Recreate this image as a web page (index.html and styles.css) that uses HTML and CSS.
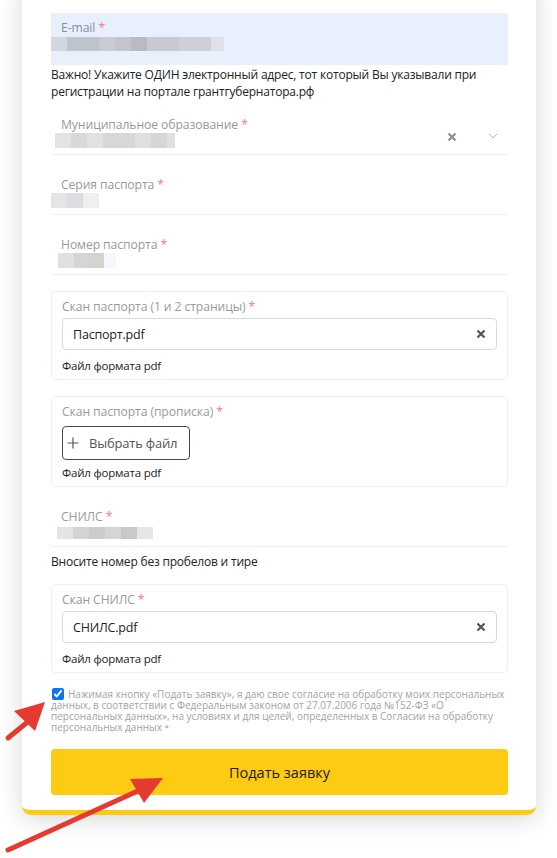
FILE: index.html
```html
<!DOCTYPE html>
<html lang="ru">
<head>
<meta charset="utf-8">
<title>Заявка</title>
<link rel="stylesheet" href="styles.css">
</head>
<body>
<div class="page">
  <form class="card">
    <div class="field field-filled">
      <div class="label">E-mail <span class="req">*</span></div>
      <div class="mosaic mosaic-email"></div>
    </div>
    <p class="hint">Важно! Укажите ОДИН электронный адрес, тот который Вы указывали при регистрации на портале грантгубернатора.рф</p>

    <div class="field field-select field-first">
      <div class="field-main">
        <div class="label">Муниципальное образование <span class="req">*</span></div>
        <div class="mosaic mosaic-muni"></div>
      </div>
      <svg class="icon-clear" viewBox="0 0 10 10" width="10" height="10"><path d="M1.5 1.5 L8.5 8.5 M8.5 1.5 L1.5 8.5" /></svg>
      <svg class="icon-chevron" viewBox="0 0 10 6" width="10" height="6"><path d="M1 1 L5 5 L9 1" /></svg>
    </div>

    <div class="field">
      <div class="label">Серия паспорта <span class="req">*</span></div>
      <div class="mosaic mosaic-series"></div>
    </div>

    <div class="field">
      <div class="label">Номер паспорта <span class="req">*</span></div>
      <div class="mosaic mosaic-number"></div>
    </div>

    <div class="upload">
      <div class="label">Скан паспорта (1 и 2 страницы) <span class="req">*</span></div>
      <div class="file-input">
        <span class="file-name">Паспорт.pdf</span>
        <svg class="icon-remove" viewBox="0 0 10 10" width="10" height="10"><path d="M1.5 1.5 L8.5 8.5 M8.5 1.5 L1.5 8.5" /></svg>
      </div>
      <div class="note">Файл формата pdf</div>
    </div>

    <div class="upload">
      <div class="label">Скан паспорта (прописка) <span class="req">*</span></div>
      <button type="button" class="choose-btn">
        <svg class="icon-plus" viewBox="0 0 12 12" width="12" height="12"><path d="M6 0.5 V11.5 M0.5 6 H11.5" /></svg>
        <span>Выбрать файл</span>
      </button>
      <div class="note note-tight">Файл формата pdf</div>
    </div>

    <div class="field field-snils">
      <div class="label">СНИЛС <span class="req">*</span></div>
      <div class="mosaic mosaic-snils"></div>
    </div>
    <p class="hint hint-snils">Вносите номер без пробелов и тире</p>

    <div class="upload upload-snils">
      <div class="label">Скан СНИЛС <span class="req">*</span></div>
      <div class="file-input">
        <span class="file-name">СНИЛС.pdf</span>
        <svg class="icon-remove" viewBox="0 0 10 10" width="10" height="10"><path d="M1.5 1.5 L8.5 8.5 M8.5 1.5 L1.5 8.5" /></svg>
      </div>
      <div class="note">Файл формата pdf</div>
    </div>

    <p class="consent"><input type="checkbox" class="consent-check" checked>Нажимая кнопку «Подать заявку», я даю свое согласие на обработку моих персональных данных, в соответствии с Федеральным законом от 27.07.2006 года №152-ФЗ «О персональных данных», на условиях и для целей, определенных в Согласии на обработку персональных данных</p>

    <button type="button" class="submit">Подать заявку</button>
  </form>
</div>

<svg class="arrows" viewBox="0 0 557 858" width="557" height="858">
  <line x1="8" y1="738" x2="30" y2="720" />
  <polygon points="45,702 14,711 35,731" />
  <line x1="8" y1="850" x2="140" y2="790" />
  <polygon points="163,778 130,779 144,803" />
</svg>
</body>
</html>
```

FILE: styles.css
```css
* {
  box-sizing: border-box;
}

html, body {
  margin: 0;
  padding: 0;
  background: #ffffff;
  overflow: hidden;
}

body {
  font-family: "Open Sans", "Noto Sans", sans-serif;
  color: #222222;
  height: 858px;
  position: relative;
}

.page {
  padding: 0 21px 0 22px;
}

.card {
  margin-top: -20px;
  background: #ffffff;
  border-radius: 0 0 9px 9px;
  border-bottom: 5px solid #fdcb14;
  box-shadow: 0 4px 24px rgba(0, 0, 0, 0.16);
  padding: 33px 28px 15px 29px;
  display: flex;
  flex-direction: column;
}

.label {
  font-size: 12.2px;
  letter-spacing: -0.1px;
  line-height: 16px;
  color: #9a9a9a;
  white-space: nowrap;
}

.field-filled .label {
  color: #8a8d93;
}

.req {
  color: #ff7a7a;
}

.field {
  height: 52px;
  margin-top: 8px;
  padding: 14px 10px 0;
  border-bottom: 1px solid #f0f0f0;
}

.field-filled {
  margin-top: 0;
  padding-top: 7px;
  height: 52px;
  background: #e8f0fe;
  border-bottom: none;
}

.field-first {
  margin-top: 3px;
}

.field-select {
  display: flex;
  align-items: flex-start;
}

.field-main {
  flex: 1;
}

.icon-clear {
  margin-top: 15px;
  margin-right: 31px;
  fill: none;
  stroke: #8f8f8f;
  stroke-width: 2.2;
}

.icon-chevron {
  margin-top: 16px;
  fill: none;
  stroke: #b5b5b5;
  stroke-width: 1;
}

.mosaic {
  height: 15px;
}

.mosaic-email {
  margin-left: -10px;
  margin-top: 1px;
  height: 14px;
  width: 173px;
  background: linear-gradient(90deg,
    #d2d6dd 0 16px, #bfc3cb 16px 48px, #c9ccd4 48px 64px, #c2c5cd 64px 80px,
    #b8bbc3 80px 96px, #c7cad3 96px 128px, #cdd0d9 128px 160px, #dde1ea 160px 173px);
}

.mosaic-muni {
  margin-left: -6px;
  width: 120px;
  background: linear-gradient(90deg,
    #e4e3e2 0 16px, #d9d8d6 16px 32px, #e2e1e0 32px 48px, #d7d8d6 48px 80px,
    #dfe0de 80px 96px, #d6d7d5 96px 112px, #dde0e4 112px 120px);
}

.mosaic-series {
  margin-left: -10px;
  width: 48px;
  background: linear-gradient(90deg, #e6e5e6 0 16px, #dcdde0 16px 32px, #eef0f0 32px 48px);
}

.mosaic-number {
  margin-left: -3px;
  width: 58px;
  background: linear-gradient(90deg, #e3dfe1 0 16px, #d5d5d5 16px 32px, #d3d3d3 32px 46px, #f4f8fc 46px 58px);
}

.mosaic-snils {
  margin-left: -4px;
  margin-top: 2px;
  height: 12px;
  width: 96px;
  background: linear-gradient(90deg,
    #e5e3e5 0 16px, #d3d2d4 16px 32px, #cdcccd 32px 48px, #d6d5d6 48px 64px,
    #c9c8ca 64px 80px, #e6e6e8 80px 96px);
}

.hint {
  margin: 1px 0 0;
  font-size: 12px;
  letter-spacing: -0.2px;
  line-height: 17px;
  color: #222222;
}

.hint-snils {
  margin-top: 6px;
}

.upload {
  margin-top: 16px;
  border: 1px solid #f0f0f0;
  border-radius: 4px;
  padding: 7px 10px 5px;
}

.upload-snils {
  margin-top: 14px;
}

.file-input {
  margin-top: 3px;
  height: 32px;
  border: 1px solid #d9d9d9;
  border-radius: 4px;
  padding: 0 10px 0 10px;
  display: flex;
  align-items: center;
  justify-content: space-between;
}

.file-name {
  font-size: 12.5px;
  letter-spacing: -0.2px;
  color: #222222;
}

.icon-remove {
  fill: none;
  stroke: #555555;
  stroke-width: 2.2;
}

.note {
  margin-top: 7px;
  font-size: 11.5px;
  letter-spacing: -0.2px;
  line-height: 17px;
  color: #222222;
}

.note-tight {
  margin-top: 4px;
}

.choose-btn {
  margin-top: 6px;
  height: 34px;
  width: 128px;
  border: 1px solid #4a4a4a;
  border-radius: 4px;
  background: #ffffff;
  padding: 0 0 0 4px;
  display: flex;
  align-items: center;
  gap: 10px;
  font-family: "Open Sans", "Noto Sans", sans-serif;
  font-size: 13px;
  letter-spacing: -0.2px;
  white-space: nowrap;
  color: #555555;
}

.icon-plus {
  fill: none;
  stroke: #555555;
  stroke-width: 1.2;
}

.field-snils {
  margin-top: 8px;
}

.consent {
  margin: 16px 0 0;
  font-size: 10px;
  line-height: 11px;
  color: #a3a3a3;
}

.consent::after {
  content: "*";
  display: inline-block;
  font-size: 7px;
  line-height: 6px;
  margin-left: 3px;
  vertical-align: 1px;
  color: #ff5a5a;
}

.consent-check {
  width: 12px;
  height: 12px;
  margin: -1px 4px -1px 1px;
  vertical-align: -2px;
  accent-color: #0b75f5;
}

.submit {
  margin-top: 16px;
  height: 46px;
  width: 100%;
  border: none;
  border-radius: 4px;
  background: #fdcb14;
  font-family: "Open Sans", "Noto Sans", sans-serif;
  font-size: 14.5px;
  color: #1a1a1a;
}

.arrows {
  position: absolute;
  left: 0;
  top: 0;
  pointer-events: none;
}

.arrows line {
  stroke: #e53a2f;
  stroke-width: 5;
  stroke-linecap: round;
}

.arrows polygon {
  fill: #e53a2f;
}
```
